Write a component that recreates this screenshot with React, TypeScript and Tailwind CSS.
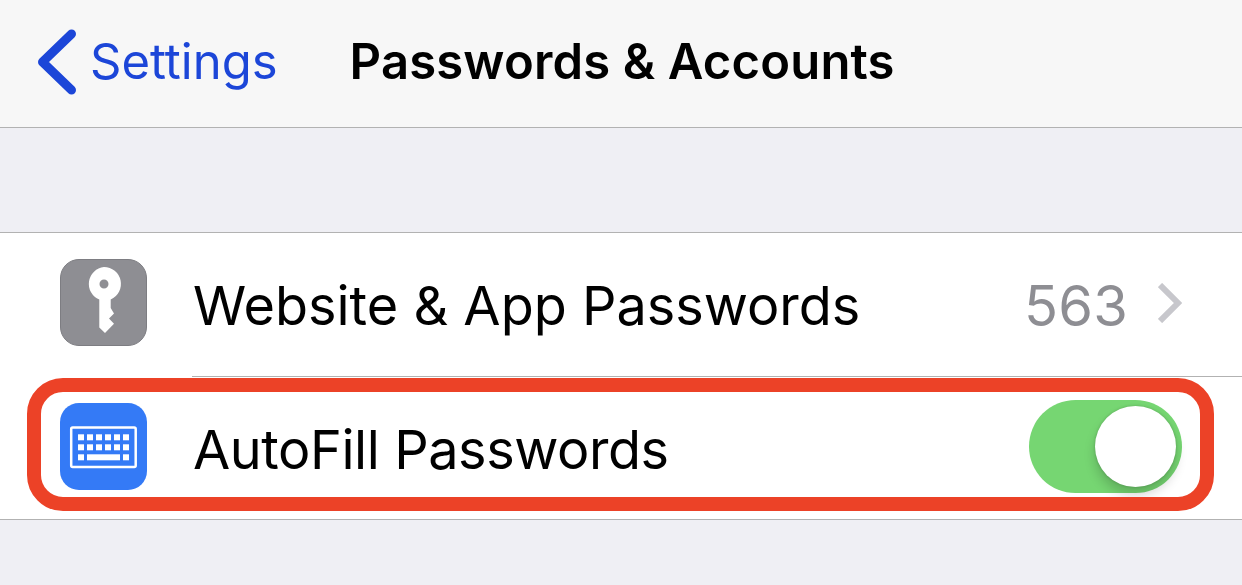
import React from "react";

const KeyIcon = () => (
  <div className="h-[87px] w-[87px] shrink-0 rounded-[19px] border border-[#7d7d82] bg-[#8e8e93]">
    <svg viewBox="0 0 87 87" className="-m-px h-[87px] w-[87px]">
      <path
        fillRule="evenodd"
        fill="#fff"
        d="M44 8a17 17 0 0 1 6.7 32.6V49l3.3 5.5-5 5 5 5.3L45 74l-5.7-5.5V40.600A17 17 0 0 1 44 8Zm0 12.500a4.500 4.500 0 1 0 0 9 4.500 4.500 0 0 0 0-9Z"
      />
    </svg>
  </div>
);

const KeyboardIcon = () => {
  const cols = [18, 27, 36, 45, 54, 63];
  return (
    <div className="h-[87px] w-[87px] shrink-0 rounded-[19px] bg-[#347af6]">
      <svg viewBox="0 0 87 87" className="h-[87px] w-[87px]" fill="#fff">
        <rect x="11.200" y="24.500" width="64.500" height="39.500" rx="1.500" fill="none" stroke="#fff" strokeWidth="2.500" />
        {cols.map((x) => (
          <rect key={`a${x}`} x={x} y="31.300" width="6" height="6" />
        ))}
        {cols.map((x) => (
          <rect key={`b${x}`} x={x} y="41.300" width="6" height="6" />
        ))}
        <rect x="18" y="51.300" width="6" height="6" />
        <rect x="27" y="51.300" width="33" height="6" />
        <rect x="63" y="51.300" width="6" height="6" />
      </svg>
    </div>
  );
};

export default function App() {
  return (
    <div className="relative h-[585px] w-[1242px] overflow-hidden bg-[#efeff4] font-['Inter',sans-serif] text-black">
      <header className="flex h-[128px] items-center border-b border-[#b2b2b2] bg-[#f7f7f7] pb-[3px] pl-[38px]">
        <svg width="38" height="66" viewBox="0 0 38 66" className="shrink-0" fill="none">
          <path d="M33.500 5 4.500 33l29 28" stroke="#1c46d8" strokeWidth="9" strokeLinecap="round" strokeLinejoin="round" />
        </svg>
        <span className="mb-[2px] ml-[14px] text-[49px] leading-none text-[#1c46d8]">Settings</span>
        <h1 className="mb-[2px] ml-[72px] text-[49px] font-semibold leading-none tracking-[0.15px]">Passwords &amp; Accounts</h1>
      </header>

      <section className="mt-[104px] border-y border-[#b2b2b2] bg-white">
        <div className="flex h-[143px] items-center pb-[4px] pl-[60px]">
          <KeyIcon />
          <span className="ml-[46px] mt-[6px] text-[54px] leading-none">Website &amp; App Passwords</span>
          <span className="ml-auto mt-[6px] text-[56px] leading-none tracking-[0.2px] text-[#8e8e93]">563</span>
          <svg width="24" height="40" viewBox="0 0 24 40" className="ml-[30px] mr-[60px] shrink-0" fill="none">
            <path d="M2 2l18 18L2 38" stroke="#c7c7cc" strokeWidth="6" />
          </svg>
        </div>
        <div className="ml-[192px] h-px bg-[#b2b2b2]" />
        <div className="flex h-[142px] items-center pb-[4px] pl-[60px]">
          <KeyboardIcon />
          <span className="ml-[46px] mt-[7px] text-[54px] leading-none tracking-[-0.43px]">AutoFill Passwords</span>
          <div className="ml-auto mr-[60px] flex h-[93px] w-[153px] items-center justify-end rounded-full bg-[#76d672] pr-[6px]">
            <div className="h-[81px] w-[81px] rounded-full bg-white shadow-[0_8px_12px_rgba(0,0,0,0.18),0_0_3px_rgba(0,0,0,0.2)]" />
          </div>
        </div>
      </section>

      <div className="absolute left-[27px] top-[378px] h-[133px] w-[1187px] rounded-[36px] border-[14px] border-[#ec4227]" />
    </div>
  );
}
